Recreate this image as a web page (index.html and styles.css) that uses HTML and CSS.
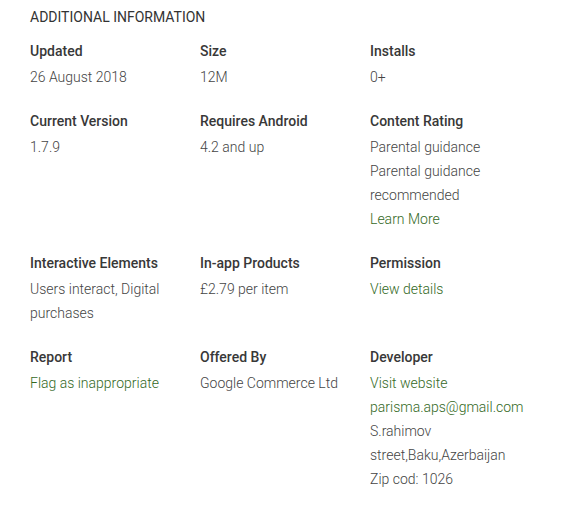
FILE: index.html
```html
<!DOCTYPE html>
<html>
<head>
<meta charset="utf-8">
<link rel="stylesheet" href="styles.css">
</head>
<body>
<div class="info">
  <h2 class="heading">ADDITIONAL INFORMATION</h2>
  <div class="grid">
    <div class="item">
      <div class="label">Updated</div>
      <div class="value">26 August 2018</div>
    </div>
    <div class="item">
      <div class="label">Size</div>
      <div class="value">12M</div>
    </div>
    <div class="item">
      <div class="label">Installs</div>
      <div class="value">0+</div>
    </div>
    <div class="item">
      <div class="label">Current Version</div>
      <div class="value">1.7.9</div>
    </div>
    <div class="item">
      <div class="label">Requires Android</div>
      <div class="value">4.2 and up</div>
    </div>
    <div class="item">
      <div class="label">Content Rating</div>
      <div class="value">Parental guidance</div>
      <div class="value">Parental guidance recommended</div>
      <div class="value"><a class="link" href="#">Learn More</a></div>
    </div>
    <div class="item">
      <div class="label">Interactive Elements</div>
      <div class="value">Users interact, Digital purchases</div>
    </div>
    <div class="item">
      <div class="label">In-app Products</div>
      <div class="value">£2.79 per item</div>
    </div>
    <div class="item">
      <div class="label">Permission</div>
      <div class="value"><a class="link" href="#">View details</a></div>
    </div>
    <div class="item">
      <div class="label">Report</div>
      <div class="value"><a class="link" href="#">Flag as inappropriate</a></div>
    </div>
    <div class="item">
      <div class="label">Offered By</div>
      <div class="value">Google Commerce Ltd</div>
    </div>
    <div class="item">
      <div class="label">Developer</div>
      <div class="value"><a class="link" href="#">Visit website</a></div>
      <div class="value"><a class="link" href="#">parisma.aps@gmail.com</a></div>
      <div class="value">S.rahimov street,Baku,Azerbaijan</div>
      <div class="value">Zip cod: 1026</div>
    </div>
  </div>
</div>
</body>
</html>
```

FILE: styles.css
```css
html, body {
  margin: 0;
  padding: 0;
  background: #fff;
}
body {
  font-family: Roboto, "Liberation Sans", Arial, sans-serif;
  font-size: 14px;
  color: #333;
}
.info {
  padding: 5px 0 0 30px;
}
.heading {
  margin: 0 0 10px 0;
  font-size: 14px;
  font-weight: 400;
  line-height: 24px;
  color: #333;
}
.grid {
  display: grid;
  grid-template-columns: 170px 170px 170px;
  row-gap: 20px;
}
.item {
  padding-right: 10px;
}
.label {
  font-weight: 500;
  line-height: 24px;
  margin-bottom: 2px;
  color: #383838;
}
.value {
  font-weight: 300;
  line-height: 24px;
  color: #444;
}
.link {
  color: #33691e;
  text-decoration: none;
}
```
